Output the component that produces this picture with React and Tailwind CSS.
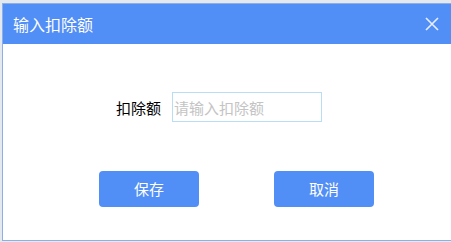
import React from "react";

const font = { fontFamily: '"Microsoft YaHei", "Noto Sans CJK SC", sans-serif' };

export default function App() {
  return (
    <div
      className="w-[451px] h-[242px] bg-[#e4e9f0] pl-[2px] pt-[3px] pb-[1px] flex overflow-hidden"
      style={font}
    >
      <div className="flex-1 flex flex-col bg-white border-l border-t border-b border-[#8eaee6]">
        <div className="h-10 bg-[#518ef5] flex items-center justify-between pl-[10px] pr-[10px]">
          <span className="text-white text-[16px] leading-none">输入扣除额</span>
          <svg width="16" height="16" viewBox="0 0 16 16" className="mr-[1px]">
            <path d="M2 2L14 14M14 2L2 14" stroke="#e8effc" strokeWidth="1.6" />
          </svg>
        </div>
        <div className="flex items-center mt-12 pl-[113px] gap-[11px]">
          <span className="text-[15px] text-black leading-none">扣除额</span>
          <input
            className="w-[150px] h-[30px] border border-[#b9ddf3] px-[1px] text-[15px] outline-none placeholder:text-[#c4c4c4]"
            placeholder="请输入扣除额"
            style={font}
          />
        </div>
        <div className="flex mt-[49px] pl-[96px] gap-[75px]">
          <button className="w-[100px] h-9 rounded bg-[#518ef5] text-white text-[15px]" style={font}>
            保存
          </button>
          <button className="w-[100px] h-9 rounded bg-[#518ef5] text-white text-[15px]" style={font}>
            取消
          </button>
        </div>
      </div>
    </div>
  );
}
